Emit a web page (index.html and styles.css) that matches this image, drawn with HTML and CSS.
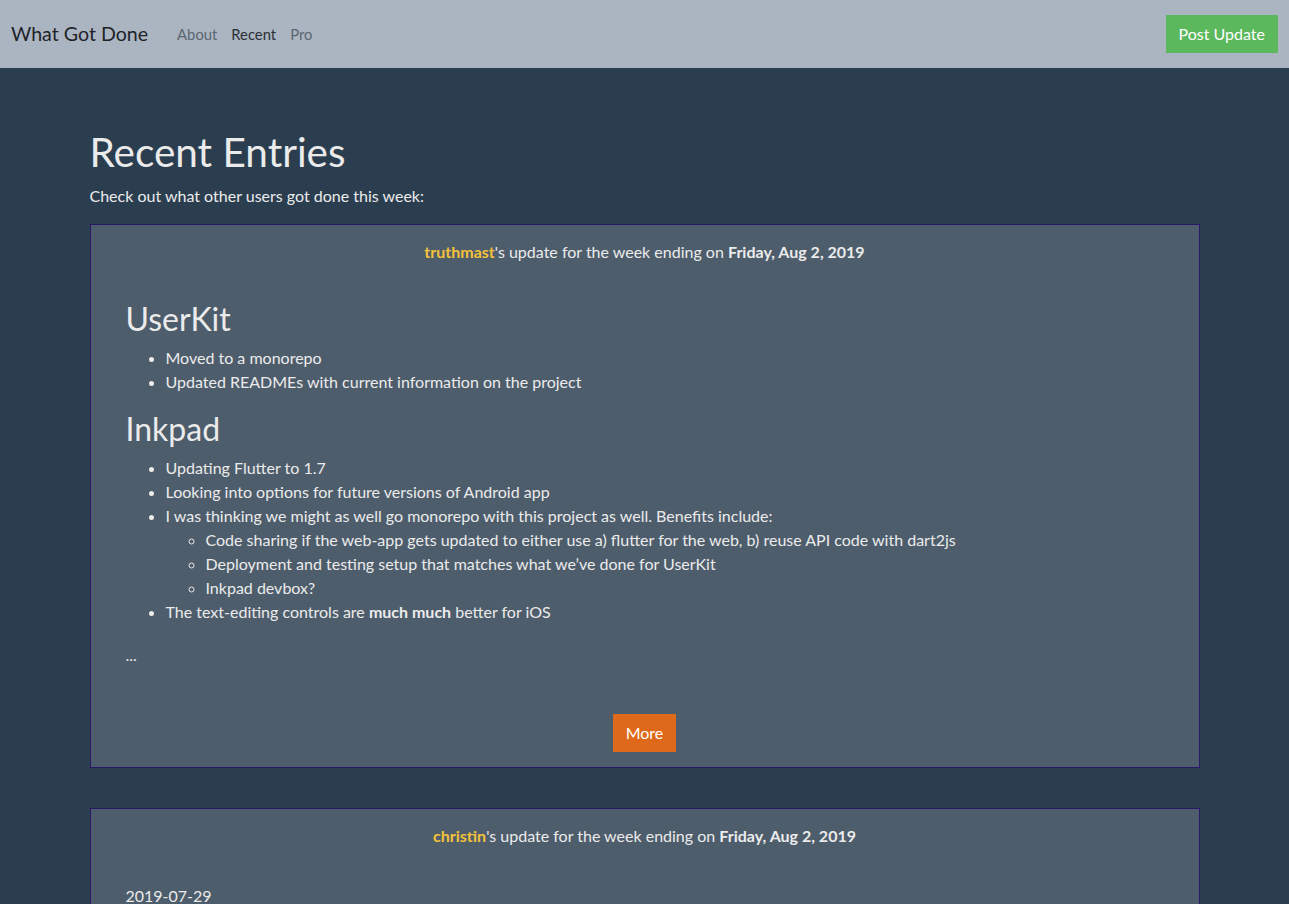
FILE: index.html
```html
<!DOCTYPE html>
<html lang="en">
<head>
<meta charset="utf-8">
<title>What Got Done - Recent</title>
<link rel="stylesheet" href="styles.css">
</head>
<body>
<nav class="navbar">
  <a class="brand" href="#">What Got Done</a>
  <ul class="nav-links">
    <li><a class="nav-link" href="#">About</a></li>
    <li><a class="nav-link active" href="#">Recent</a></li>
    <li><a class="nav-link" href="#">Pro</a></li>
  </ul>
  <a class="btn btn-success" href="#">Post Update</a>
</nav>
<main class="container">
  <h1 class="page-title">Recent Entries</h1>
  <p class="lead-text">Check out what other users got done this week:</p>

  <section class="card">
    <p class="card-header-text"><a class="username" href="#">truthmast</a>'s update for the week ending on <strong>Friday, Aug 2, 2019</strong></p>
    <div class="entry">
      <h2>UserKit</h2>
      <ul>
        <li>Moved to a monorepo</li>
        <li>Updated READMEs with current information on the project</li>
      </ul>
      <h2>Inkpad</h2>
      <ul>
        <li>Updating Flutter to 1.7</li>
        <li>Looking into options for future versions of Android app</li>
        <li>I was thinking we might as well go monorepo with this project as well. Benefits include:
          <ul>
            <li>Code sharing if the web-app gets updated to either use a) flutter for the web, b) reuse API code with dart2js</li>
            <li>Deployment and testing setup that matches what we’ve done for UserKit</li>
            <li>Inkpad devbox?</li>
          </ul>
        </li>
        <li>The text-editing controls are <strong>much much</strong> better for iOS</li>
      </ul>
      <p class="ellipsis">...</p>
    </div>
    <div class="card-footer">
      <a class="btn btn-primary" href="#">More</a>
    </div>
  </section>

  <section class="card">
    <p class="card-header-text"><a class="username" href="#">christin</a>'s update for the week ending on <strong>Friday, Aug 2, 2019</strong></p>
    <div class="entry">
      <p>2019-07-29</p>
      <p>&nbsp;</p>
    </div>
  </section>
</main>
</body>
</html>
```

FILE: styles.css
```css
* { box-sizing: border-box; }
html, body { margin: 0; padding: 0; }
body {
  background: #2b3e50;
  color: #ebebeb;
  font-family: Lato, "Liberation Sans", sans-serif;
  font-size: 16px;
  line-height: 24px;
}
a { text-decoration: none; }

.navbar {
  display: flex;
  align-items: center;
  height: 68px;
  padding: 0 11px;
  background: #abb5c1;
}
.brand {
  font-size: 19.6px;
  color: #1e2328;
  line-height: 30px;
  margin-right: 22px;
}
.nav-links {
  display: flex;
  list-style: none;
  margin: 0;
  padding: 0;
  flex: 1;
}
.nav-link {
  display: block;
  padding: 8px 7px;
  font-size: 14.8px;
  color: #5b6673;
}
.nav-link.active { color: #2a2f36; }

.btn {
  display: inline-block;
  font-size: 16px;
  line-height: 24px;
  padding: 7px 13px;
  color: #fff;
}
.btn-success { background: #5cb85c; }
.btn-primary { background: #df691a; }

.container {
  width: 1110px;
  margin: 0 auto;
  padding-top: 60px;
  padding-bottom: 40px;
}
.page-title {
  font-size: 40.5px;
  font-weight: 400;
  line-height: 48px;
  margin: 0 0 8px;
}
.lead-text { margin: 0 0 16px; }

.card {
  background: #4e5d6c;
  border: 1px solid #2a1868;
  padding: 15px 35px;
  margin-bottom: 40px;
}
.card-header-text {
  margin: 0;
  text-align: center;
  font-size: 16px;
}
.username { color: #f4c23a; font-weight: 700; }

.entry { padding-top: 36px; }
.entry h2 {
  font-size: 32px;
  font-weight: 400;
  line-height: 38px;
  margin: 0 0 8px;
}
.entry ul {
  margin: 0 0 16px;
  padding-left: 40px;
}
.entry ul ul { margin: 0; list-style: circle; }
.entry p { margin: 0 0 16px; }
.entry .ellipsis { padding-top: 3px; margin-bottom: 13px; }

.card-footer {
  text-align: center;
  padding-top: 34px;
}
```
